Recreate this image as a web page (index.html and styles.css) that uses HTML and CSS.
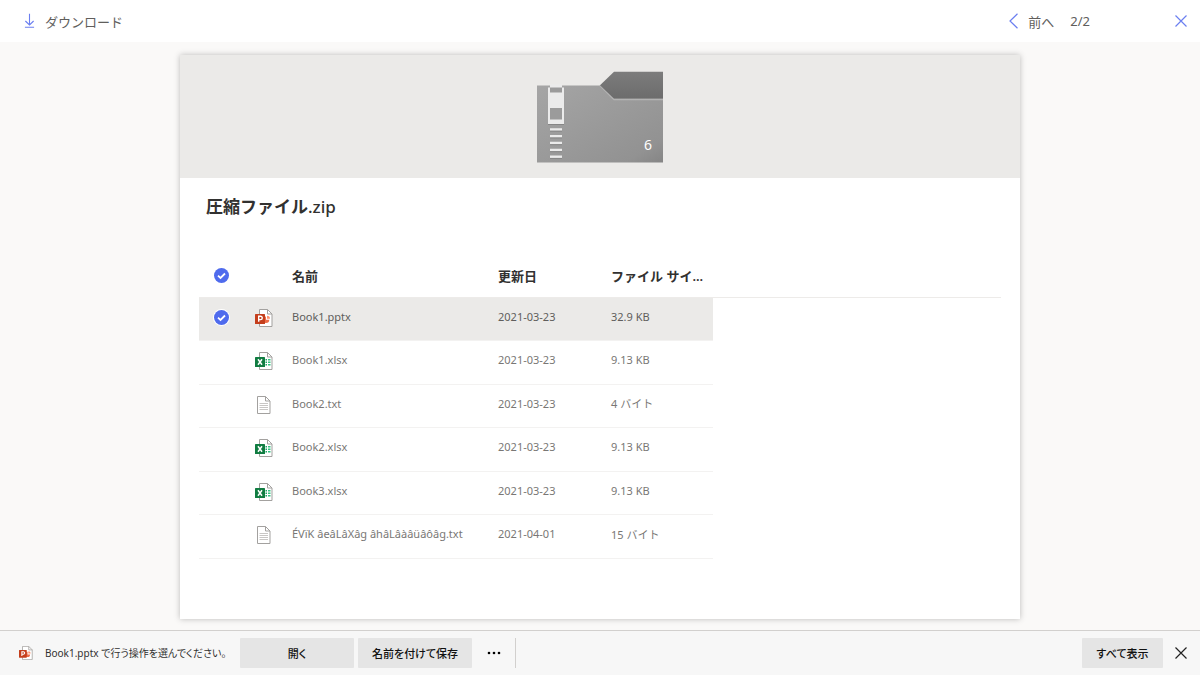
FILE: index.html
```html
<!DOCTYPE html>
<html lang="ja">
<head>
    <meta charset="UTF-8">
    <meta name="viewport" content="width=device-width, initial-scale=1.0">
    <title>圧縮ファイル.zip</title>
    <link rel="stylesheet" href="styles.css">
</head>
<body>
    <!-- shared file icons -->
    <svg class="sprite" aria-hidden="true">
        <symbol id="icon-pptx" viewBox="0 0 18 18">
            <path d="M4.500.5h8l4.500 4.500v12.500h-12.500z" fill="#fff" stroke="#a3a19f"/>
            <path d="M12.500.5v4.500h4.500" fill="none" stroke="#a3a19f"/>
            <path d="M11 7.500a3.300 3.300 0 1 0 3.300 3.300H11z" fill="#ed6c47"/>
            <path d="M12 6.800v3h3a3 3 0 0 0-3-3z" fill="#ff8f6b"/>
            <rect y="5" width="10" height="10" rx=".6" fill="#c43e1c"/>
            <path d="M3.700 12.800V7.300h1.900a1.500 1.500 0 0 1 0 3.300H3.700" fill="none" stroke="#fff" stroke-width="1.400"/>
        </symbol>
        <symbol id="icon-xlsx" viewBox="0 0 18 18">
            <path d="M4.500.5h8l4.500 4.500v12.500h-12.500z" fill="#fff" stroke="#a3a19f"/>
            <path d="M12.500.5v4.500h4.500" fill="none" stroke="#a3a19f"/>
            <path d="M10.500 7h1.500v1.500h-1.500zM10.500 9.500h1.500v1.500h-1.500zM10.500 12h1.500v1.500h-1.500z" fill="#21a366"/>
            <path d="M13 7h2.500v1.500H13zM13 9.500h2.500v1.500H13zM13 12h2.500v1.500H13z" fill="#33c481"/>
            <rect y="5" width="10" height="10" rx=".6" fill="#107c41"/>
            <path d="M3 7.300l4 5.400M7 7.300l-4 5.400" stroke="#fff" stroke-width="1.500"/>
        </symbol>
        <symbol id="icon-txt" viewBox="0 0 18 18">
            <path d="M2.500.5h8l4.500 4.500v12.500h-12.500z" fill="#fff" stroke="#a3a19f"/>
            <path d="M10.500.5v4.500h4.500" fill="none" stroke="#a3a19f"/>
            <path d="M4.500 7.500h8.500M4.500 9.500h8.500M4.500 11.500h8.500M4.500 13.500h8.500" stroke="#c8c6c4"/>
        </symbol>
    </svg>

    <header class="topbar">
        <button class="bar-btn" type="button">
            <svg class="icon-download" viewBox="0 0 12 16"><path d="M6 0v12M1.500 8L6 12.300 10.500 8M1 14.800h10"/></svg>
            ダウンロード
        </button>
        <nav class="pager">
            <button class="bar-btn" type="button">
                <svg class="icon-prev" viewBox="0 0 9 16"><path d="M8.500.8L1 8l7.500 7.200"/></svg>
                前へ
            </button>
            <span class="page-count">2/2</span>
        </nav>
        <button class="bar-btn" type="button" aria-label="閉じる">
            <svg class="icon-close" viewBox="0 0 12 12"><path d="M.5.5l11 11M11.500.5l-11 11"/></svg>
        </button>
    </header>

    <main class="stage">
        <article class="panel">
            <div class="banner">
                <svg class="folder" viewBox="0 0 126 92" role="img" aria-label="6 個のファイル">
                    <defs>
                        <linearGradient id="body-fill" x1="0" y1="0" x2="1" y2="1">
                            <stop offset="0" stop-color="#a5a5a5"/>
                            <stop offset=".85" stop-color="#929292"/>
                            <stop offset="1" stop-color="#858585"/>
                        </linearGradient>
                        <linearGradient id="tab-fill" x1="0" y1="0" x2="0" y2="1">
                            <stop offset="0" stop-color="#7c7c7c"/>
                            <stop offset="1" stop-color="#6c6c6c"/>
                        </linearGradient>
                    </defs>
                    <path d="M0 14.500h63l14 14h49V91.500H0z" fill="url(#body-fill)"/>
                    <path d="M63 14.500l14 14h49" fill="none" stroke="#b3b3b3" stroke-width="1.500"/>
                    <path d="M63 14.300L77 .8h49v27H77z" fill="url(#tab-fill)"/>
                    <path d="M13 13.500h12v3h2v36.500H11V16.500h2z" fill="#ebebeb"/>
                    <path d="M13 16.500h12V21.500H13zM13 37h12v11.500H13z" fill="#9b9b9b"/>
                    <path d="M13 58.500h12M13 65.300h12M13 72h12M13 79h12M13 85.700h12" stroke="#ebebeb" stroke-width="2.400"/>
                    <path d="M13 60.200h12M13 67h12M13 73.700h12M13 80.700h12M13 87.400h12M11 53.500h16" stroke="#868686" stroke-width="1"/>
                    <text x="107" y="79" class="folder-count">6</text>
                </svg>
            </div>
            <h1 class="title">圧縮ファイル<span class="ext">.zip</span></h1>
            <table class="files">
                <colgroup>
                    <col class="col-check">
                    <col class="col-icon">
                    <col class="col-name">
                    <col class="col-date">
                    <col class="col-size">
                    <col>
                </colgroup>
                <thead>
                    <tr>
                        <th><input type="checkbox" class="check" aria-label="すべて選択" checked></th>
                        <th></th>
                        <th>名前</th>
                        <th>更新日</th>
                        <th>ファイル サイ...</th>
                        <th></th>
                    </tr>
                </thead>
                <tbody>
                    <tr class="selected">
                        <td><input type="checkbox" class="check" aria-label="Book1.pptx" checked></td>
                        <td><svg class="file-icon"><use href="#icon-pptx"/></svg></td>
                        <td>Book1.pptx</td>
                        <td>2021-03-23</td>
                        <td>32.9 KB</td>
                        <td></td>
                    </tr>
                    <tr>
                        <td><input type="checkbox" class="check" aria-label="Book1.xlsx"></td>
                        <td><svg class="file-icon"><use href="#icon-xlsx"/></svg></td>
                        <td>Book1.xlsx</td>
                        <td>2021-03-23</td>
                        <td>9.13 KB</td>
                        <td></td>
                    </tr>
                    <tr>
                        <td><input type="checkbox" class="check" aria-label="Book2.txt"></td>
                        <td><svg class="file-icon"><use href="#icon-txt"/></svg></td>
                        <td>Book2.txt</td>
                        <td>2021-03-23</td>
                        <td>4 バイト</td>
                        <td></td>
                    </tr>
                    <tr>
                        <td><input type="checkbox" class="check" aria-label="Book2.xlsx"></td>
                        <td><svg class="file-icon"><use href="#icon-xlsx"/></svg></td>
                        <td>Book2.xlsx</td>
                        <td>2021-03-23</td>
                        <td>9.13 KB</td>
                        <td></td>
                    </tr>
                    <tr>
                        <td><input type="checkbox" class="check" aria-label="Book3.xlsx"></td>
                        <td><svg class="file-icon"><use href="#icon-xlsx"/></svg></td>
                        <td>Book3.xlsx</td>
                        <td>2021-03-23</td>
                        <td>9.13 KB</td>
                        <td></td>
                    </tr>
                    <tr>
                        <td><input type="checkbox" class="check" aria-label="テキスト ファイル"></td>
                        <td><svg class="file-icon"><use href="#icon-txt"/></svg></td>
                        <td>ÉVïK âeâLâXâg âhâLâàâüâôâg.txt</td>
                        <td>2021-04-01</td>
                        <td>15 バイト</td>
                        <td></td>
                    </tr>
                </tbody>
            </table>
        </article>
    </main>

    <footer class="download-bar">
        <svg class="download-icon"><use href="#icon-pptx"/></svg>
        <span class="download-text">Book1.pptx で行う操作を選んでください。</span>
        <button class="btn btn-wide" type="button">開く</button>
        <button class="btn btn-wide" type="button">名前を付けて保存</button>
        <button class="more" type="button" aria-label="その他">
            <svg class="icon-more" viewBox="0 0 14 4"><circle cx="2" cy="2" r="1.300"/><circle cx="7" cy="2" r="1.300"/><circle cx="12" cy="2" r="1.300"/></svg>
        </button>
        <button class="btn show-all" type="button">すべて表示</button>
        <button class="dismiss" type="button" aria-label="閉じる">
            <svg class="icon-close" viewBox="0 0 12 12"><path d="M.5.5l11 11M11.500.5l-11 11"/></svg>
        </button>
    </footer>
</body>
</html>
```
FILE: styles.css
```css
* {
    box-sizing: border-box;
}
body {
    display: flex;
    flex-direction: column;
    min-height: 100vh;
    margin: 0;
    background: #faf9f8;
    color: #323130;
    font-family: "Noto Sans", "Noto Sans CJK JP", sans-serif;
    font-size: 11px;
}
button {
    padding: 0;
    border: none;
    background: none;
    color: inherit;
    font: inherit;
    cursor: pointer;
}
svg {
    display: block;
    flex: none;
}
.sprite {
    position: absolute;
    width: 0;
    height: 0;
}

/* top bar */
.topbar {
    display: flex;
    align-items: center;
    height: 42px;
    padding: 0 13px 0 24px;
    background: #fff;
    color: #605e5c;
    font-size: 13px;
}
.bar-btn {
    display: flex;
    align-items: center;
    gap: 10px;
}
.bar-btn path {
    fill: none;
    stroke: #6b7ff0;
    stroke-width: 1.2;
}
.pager {
    display: flex;
    align-items: center;
    gap: 16px;
    margin-left: auto;
    margin-right: 85px;
}
.icon-download {
    width: 11px;
    height: 16px;
}
.icon-prev {
    width: 9px;
    height: 16px;
}
.icon-close {
    width: 12px;
    height: 12px;
}

/* file panel */
.stage {
    display: flex;
    flex: 1;
    justify-content: center;
    padding: 13px 0 11px;
}
.panel {
    width: 70%;
    background: #fff;
    box-shadow: 0 0 6px rgba(0, 0, 0, 0.25);
}
.banner {
    display: flex;
    justify-content: center;
    padding: 16px 0 15px;
    background: #ebeae8;
}
.folder {
    width: 126px;
    height: 92px;
}
.folder-count {
    fill: #fff;
    font-size: 14px;
}
.title {
    margin: 0;
    padding: 17px 26px 0;
    font-size: 17px;
    font-weight: 600;
    line-height: 24px;
}
.ext {
    font-weight: 500;
}
.files {
    width: calc(100% - 38px);
    margin: 37px 19px 0;
    border-collapse: collapse;
    table-layout: fixed;
}
.col-check {
    width: 44px;
}
.col-icon {
    width: 49px;
}
.col-name {
    width: 206px;
}
.col-date {
    width: 113px;
}
.col-size {
    width: 102px;
}
.files th,
.files td {
    padding: 0;
    text-align: left;
    white-space: nowrap;
}
.files th {
    height: 41px;
    padding-bottom: 2px;
    border-bottom: 1px solid #edebe9;
    font-size: 13px;
    font-weight: 600;
}
.files td {
    height: 43px;
    padding-bottom: 5px;
    border-bottom: 1px solid #f3f2f1;
    color: #797775;
}
.files tr:nth-child(even) td {
    height: 44px;
}
.files td:nth-child(1),
.files td:nth-child(2) {
    padding-bottom: 2px;
}
.files td:last-child {
    border: none;
}
.files .selected td:not(:last-child) {
    background: #ebeae8;
    color: #605e5c;
}
.check {
    display: block;
    width: 15px;
    height: 15px;
    margin: 0 15px;
    border-radius: 50%;
    appearance: none;
    opacity: 0;
}
.check:checked {
    background: #4f6bed url("data:image/svg+xml,%3Csvg xmlns='http://www.w3.org/2000/svg' viewBox='0 0 15 15'%3E%3Cpath d='M4 7.600l2.500 2.300L11 5.500' fill='none' stroke='white' stroke-width='1.800'/%3E%3C/svg%3E");
    opacity: 1;
}
.selected .check {
    box-shadow: 0 0 0 1px #fff;
}
.file-icon {
    width: 18px;
    height: 18px;
    margin-left: 12px;
}

/* bottom download bar */
.download-bar {
    display: flex;
    align-items: center;
    height: 45px;
    padding: 0 13px 1px 19px;
    border-top: 1px solid #d2d0ce;
    background: #f7f7f7;
}
.download-icon {
    width: 14px;
    height: 14px;
}
.download-text {
    width: 195px;
    margin-left: 12px;
    font-size: 10px;
    white-space: nowrap;
    font-feature-settings: "palt";
}
.btn {
    height: 30px;
    border-radius: 1px;
    background: #e5e5e5;
    color: #111;
    font-weight: 500;
    font-feature-settings: "palt";
}
.btn-wide {
    width: 114px;
    margin-right: 4px;
}
.more {
    display: flex;
    align-items: center;
    justify-content: center;
    width: 40px;
    height: 30px;
    padding-right: 4px;
    border-right: 1px solid #d2d0ce;
}
.icon-more {
    width: 14px;
    height: 4px;
}
.show-all {
    width: 81px;
    margin-left: auto;
}
.dismiss {
    margin-left: 12px;
}
.dismiss path {
    stroke: #222;
    stroke-width: 1.2;
}
```
